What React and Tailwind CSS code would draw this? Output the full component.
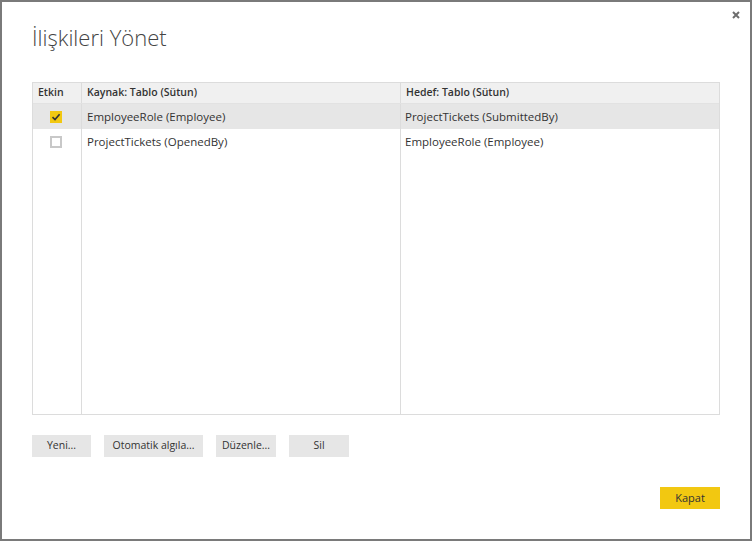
import React from "react";

const font = { fontFamily: '"Open Sans", "Noto Sans", sans-serif' };

const rows = [
  { on: true, src: "EmployeeRole (Employee)", dst: "ProjectTickets (SubmittedBy)" },
  { on: false, src: "ProjectTickets (OpenedBy)", dst: "EmployeeRole (Employee)" },
];

const Check = ({ on }) =>
  on ? (
    <div className="w-[12px] h-[12px] bg-[#f2c811] flex items-center justify-center">
      <svg width="10" height="10" viewBox="0 0 10 10">
        <path d="M1.5 5.2 L4 7.6 L8.6 2.2" fill="none" stroke="#333" strokeWidth="1.6" />
      </svg>
    </div>
  ) : (
    <div className="w-[12px] h-[12px] border-2 border-[#c8c8c8] bg-white" />
  );

const Btn = ({ children, w }) => (
  <button className={`h-[22px] bg-[#e6e6e6] text-[10.5px] text-[#333] ${w}`}>{children}</button>
);

export default function App() {
  return (
    <div style={font} className="w-[752px] h-[541px] border-2 border-[#7a7a7a] bg-white flex flex-col relative text-[#333]">
      <div className="absolute right-[10px] top-[9px]">
        <svg width="8" height="8" viewBox="0 0 8 8">
          <path d="M1 1 L7 7 M7 1 L1 7" stroke="#6d6d6d" strokeWidth="2" />
        </svg>
      </div>
      <h1 className="ml-[30px] mt-[20px] text-[22px] font-light leading-[30px] text-[#444]">İlişkileri Yönet</h1>

      <div className="ml-[30px] mt-[30px] w-[688px] h-[333px] border border-[#dcdcdc] flex flex-col text-[11.5px]">
        <div className="flex h-[21px] bg-[#f0f0f0] border-b border-[#e2e2e2] font-semibold text-[10.5px] items-center">
          <div className="w-[49px] pl-[5px] border-r border-[#dcdcdc] h-full flex items-center">Etkin</div>
          <div className="w-[319px] pl-[5px] border-r border-[#dcdcdc] h-full flex items-center">Kaynak: Tablo (Sütun)</div>
          <div className="flex-1 pl-[5px] h-full flex items-center">Hedef: Tablo (Sütun)</div>
        </div>
        <div className="flex flex-1">
          <div className="w-[49px] border-r border-[#dcdcdc] flex flex-col">
            {rows.map((r, i) => (
              <div key={i} className={`h-[25px] flex items-center pl-[17px] ${r.on ? "bg-[#e6e6e6]" : ""}`}>
                <Check on={r.on} />
              </div>
            ))}
          </div>
          <div className="w-[319px] border-r border-[#dcdcdc] flex flex-col">
            {rows.map((r, i) => (
              <div key={i} className={`h-[25px] flex items-center pl-[5px] ${r.on ? "bg-[#e6e6e6]" : ""}`}>{r.src}</div>
            ))}
          </div>
          <div className="flex-1 flex flex-col">
            {rows.map((r, i) => (
              <div key={i} className={`h-[25px] flex items-center pl-[4px] ${r.on ? "bg-[#e6e6e6]" : ""}`}>{r.dst}</div>
            ))}
          </div>
        </div>
      </div>

      <div className="ml-[30px] mt-[20px] flex gap-[13px]">
        <Btn w="w-[59px]">Yeni...</Btn>
        <Btn w="w-[99px]">Otomatik algıla...</Btn>
        <Btn w="w-[60px]">Düzenle...</Btn>
        <Btn w="w-[60px]">Sil</Btn>
      </div>

      <div className="flex justify-end mr-[30px] mt-[30px]">
        <button className="w-[60px] h-[22px] bg-[#f2c811] text-[11px] text-[#333]">Kapat</button>
      </div>
    </div>
  );
}
